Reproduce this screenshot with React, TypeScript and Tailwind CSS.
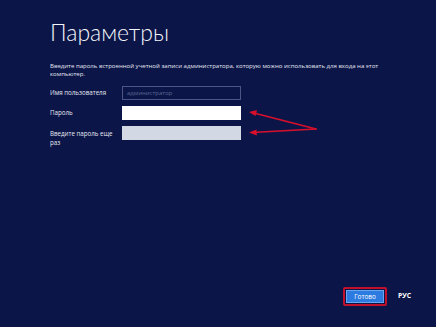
import React from "react";

export default function App() {
  const font = { fontFamily: '"Open Sans", "Noto Sans", sans-serif' };
  return (
    <div
      className="relative w-[436px] h-[327px] bg-[#0b1548] text-white overflow-hidden"
      style={font}
    >
      <div className="pl-[50px] pt-[17px]">
        <h1
          className="text-[23px] leading-[30px] font-light text-[#f4f6fb]"
          style={{ fontFamily: 'Lato, "Open Sans", sans-serif' }}
        >
          Параметры
        </h1>
        <p className="mt-[15px] text-[6.05px] leading-[8px] w-[340px] text-[#e6e9f2]">
          Введите пароль встроенной учетной записи администратора, которую можно использовать для входа на этот компьютер.
        </p>
        <div className="mt-[8px] flex flex-col gap-[6px]">
          <div className="flex items-center">
            <div className="w-[72px] text-[6.2px] leading-[8px] text-[#e6e9f2]">Имя пользователя</div>
            <div className="w-[119px] h-[14px] border border-[#4a5684] flex items-center px-[4px] text-[6px] text-[#5c6892]">
              администратор
            </div>
          </div>
          <div className="flex items-center">
            <div className="w-[72px] text-[6.2px] leading-[8px] text-[#e6e9f2]">Пароль</div>
            <div className="w-[119px] h-[14px] bg-white" />
          </div>
          <div className="flex items-start">
            <div className="w-[72px] text-[6.2px] leading-[9px] text-[#e6e9f2] pt-[3px]">
              Введите пароль еще
              <br />
              раз
            </div>
            <div className="w-[119px] h-[14px] bg-[#d3d9e4]" />
          </div>
        </div>
      </div>

      <div className="absolute left-[343px] top-[287px] flex items-center">
        <div className="border-[2px] border-[#c0102c] rounded-[2px] p-[1px]">
          <div className="w-[38px] h-[13px] bg-[#2c7be0] border border-[#6aa6f0] flex items-center justify-center text-[6.4px] text-white">
            Готово
          </div>
        </div>
        <div className="ml-[11px] text-[6.8px] font-bold text-white">РУС</div>
      </div>

      <svg className="absolute left-0 top-0" width="436" height="327">
        <g stroke="#d8102c" strokeWidth="1.6" fill="none" strokeLinecap="round">
          <line x1="316" y1="129" x2="252" y2="112.5" />
          <line x1="316" y1="129" x2="252" y2="132.5" />
        </g>
        <polygon points="249,112 257,110 255.5,116" fill="#d8102c" />
        <polygon points="249,132.6 256.5,129.4 256.8,135.6" fill="#d8102c" />
      </svg>
    </div>
  );
}
